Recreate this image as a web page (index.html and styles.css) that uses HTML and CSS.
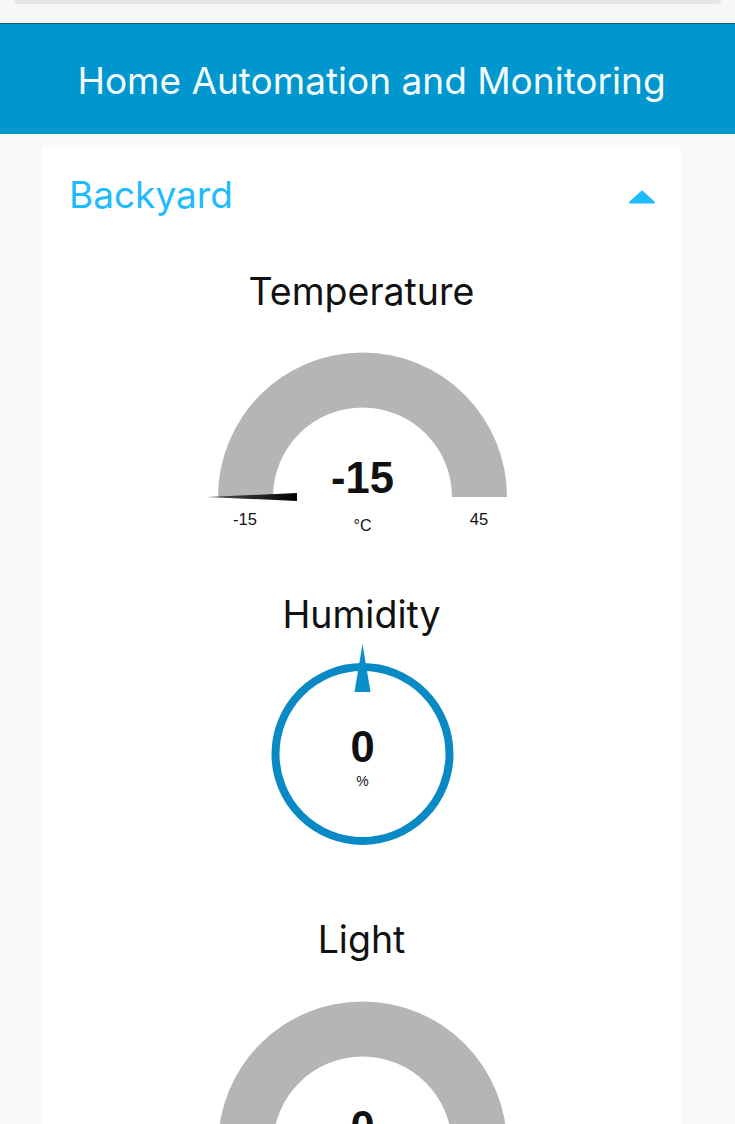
FILE: index.html
```html
<!DOCTYPE html>
<html>
<head>
<meta charset="utf-8">
<title>Home Automation and Monitoring</title>
<link rel="stylesheet" href="styles.css">
</head>
<body>
<div class="topbar"><div class="topbar-strip"></div></div>
<header class="appbar"><h1 class="appbar-title">Home Automation and Monitoring</h1></header>
<main class="content">
  <section class="card">
    <div class="card-head">
      <h2 class="card-title">Backyard</h2>
      <svg class="caret" width="28" height="14" viewBox="0 0 28 14"><path d="M2 12.5 L14 1.5 L26 12.5 Z" fill="#1fbcfd" stroke="#1fbcfd" stroke-width="2" stroke-linejoin="round"/></svg>
    </div>

    <div class="widget widget-temp">
      <div class="widget-title">Temperature</div>
      <svg class="gauge" width="320" height="200" viewBox="0 0 320 200">
        <defs>
          <linearGradient id="needle" x1="0" x2="1" y1="0" y2="0">
            <stop offset="0" stop-color="#555"/>
            <stop offset="1" stop-color="#000"/>
          </linearGradient>
        </defs>
        <path d="M16 157 A144.5 144.5 0 0 1 305 157 L250 157 A89.5 89.5 0 0 0 71 157 Z" fill="#b5b5b5"/>
        <path d="M5 157 L95 153 L95 161 Z" fill="url(#needle)"/>
        <text class="g-value" x="160.5" y="153" text-anchor="middle">-15</text>
        <text class="g-label" x="43" y="185" text-anchor="middle">-15</text>
        <text class="g-label" x="277" y="185" text-anchor="middle">45</text>
        <text class="g-unit" x="160.5" y="191" text-anchor="middle">°C</text>
      </svg>
    </div>

    <div class="widget widget-hum">
      <div class="widget-title">Humidity</div>
      <svg class="dial" width="320" height="210" viewBox="0 0 320 210">
        <circle cx="160.5" cy="113" r="87" fill="none" stroke="#0a8ac4" stroke-width="8"/>
        <path d="M160.5 3 L152.5 51 L168.5 51 Z" fill="#0a8ecb"/>
        <text class="g-value" x="160.5" y="121" text-anchor="middle">0</text>
        <text class="g-unit-sm" x="160.5" y="145" text-anchor="middle">%</text>
      </svg>
    </div>

    <div class="widget widget-light">
      <div class="widget-title">Light</div>
      <svg class="gauge" width="320" height="200" viewBox="0 0 320 200">
        <path d="M16 157 A144.5 144.5 0 0 1 305 157 L250 157 A89.5 89.5 0 0 0 71 157 Z" fill="#b5b5b5"/>
        <text class="g-value" x="160.5" y="153" text-anchor="middle">0</text>
      </svg>
    </div>
  </section>
</main>
</body>
</html>
```
FILE: styles.css
```css
html, body {
  margin: 0;
  padding: 0;
  background: #f9f9f9;
  font-family: Inter, "Noto Sans", sans-serif;
  color: #111;
}
.topbar {
  height: 23px;
  background: #f7f7f7;
}
.topbar-strip {
  margin: 0 14px;
  height: 4px;
  background: #e5e5e7;
  border-radius: 0 0 8px 8px;
}
.appbar {
  background: #0096ce;
  border-top: 1px solid #1b5d78;
  height: 110px;
  display: flex;
  align-items: center;
  justify-content: center;
}
.appbar-title {
  margin: 0;
  color: #f4fbfe;
  font-weight: 400;
  font-size: 37px;
  letter-spacing: 0;
  padding-left: 8px;
  padding-top: 2px;
}
.content {
  padding-top: 13px;
}
.card {
  background: #fff;
  margin-left: 42px;
  width: 639px;
  overflow: hidden;
  height: 990px;
}
.card-head {
  display: flex;
  align-items: center;
  justify-content: space-between;
  padding: 23px 25px 0 27px;
  height: 48px;
}
.card-title {
  margin: 0;
  font-weight: 400;
  font-size: 37px;
  color: #1fbcfd;
}
.caret {
  display: block;
  margin-top: 6px;
}
.widget {
  display: flex;
  flex-direction: column;
  align-items: center;
}
.widget-title {
  font-size: 37.5px;
  line-height: 44px;
  color: #111;
}
.widget-temp {
  margin-top: 52px;
}
.widget-hum {
  margin-top: 53px;
}
.widget-light {
  margin-top: 67px;
}
.gauge, .dial {
  display: block;
  margin-left: 1px;
}
.widget-temp .gauge {
  margin-top: 26px;
}
.widget-hum .dial {
  margin-top: 4px;
}
.widget-light .gauge {
  margin-top: 27px;
}
.g-value {
  font-family: "Liberation Sans", Arial, sans-serif;
  font-weight: 700;
  font-size: 43.5px;
  fill: #111;
}
.g-label {
  font-family: "Liberation Sans", Arial, sans-serif;
  font-size: 16.5px;
  fill: #111;
}
.g-unit {
  font-family: "Liberation Sans", Arial, sans-serif;
  font-size: 16px;
  fill: #111;
}
.g-unit-sm {
  font-family: "Liberation Sans", Arial, sans-serif;
  font-size: 14px;
  fill: #111;
}
```
